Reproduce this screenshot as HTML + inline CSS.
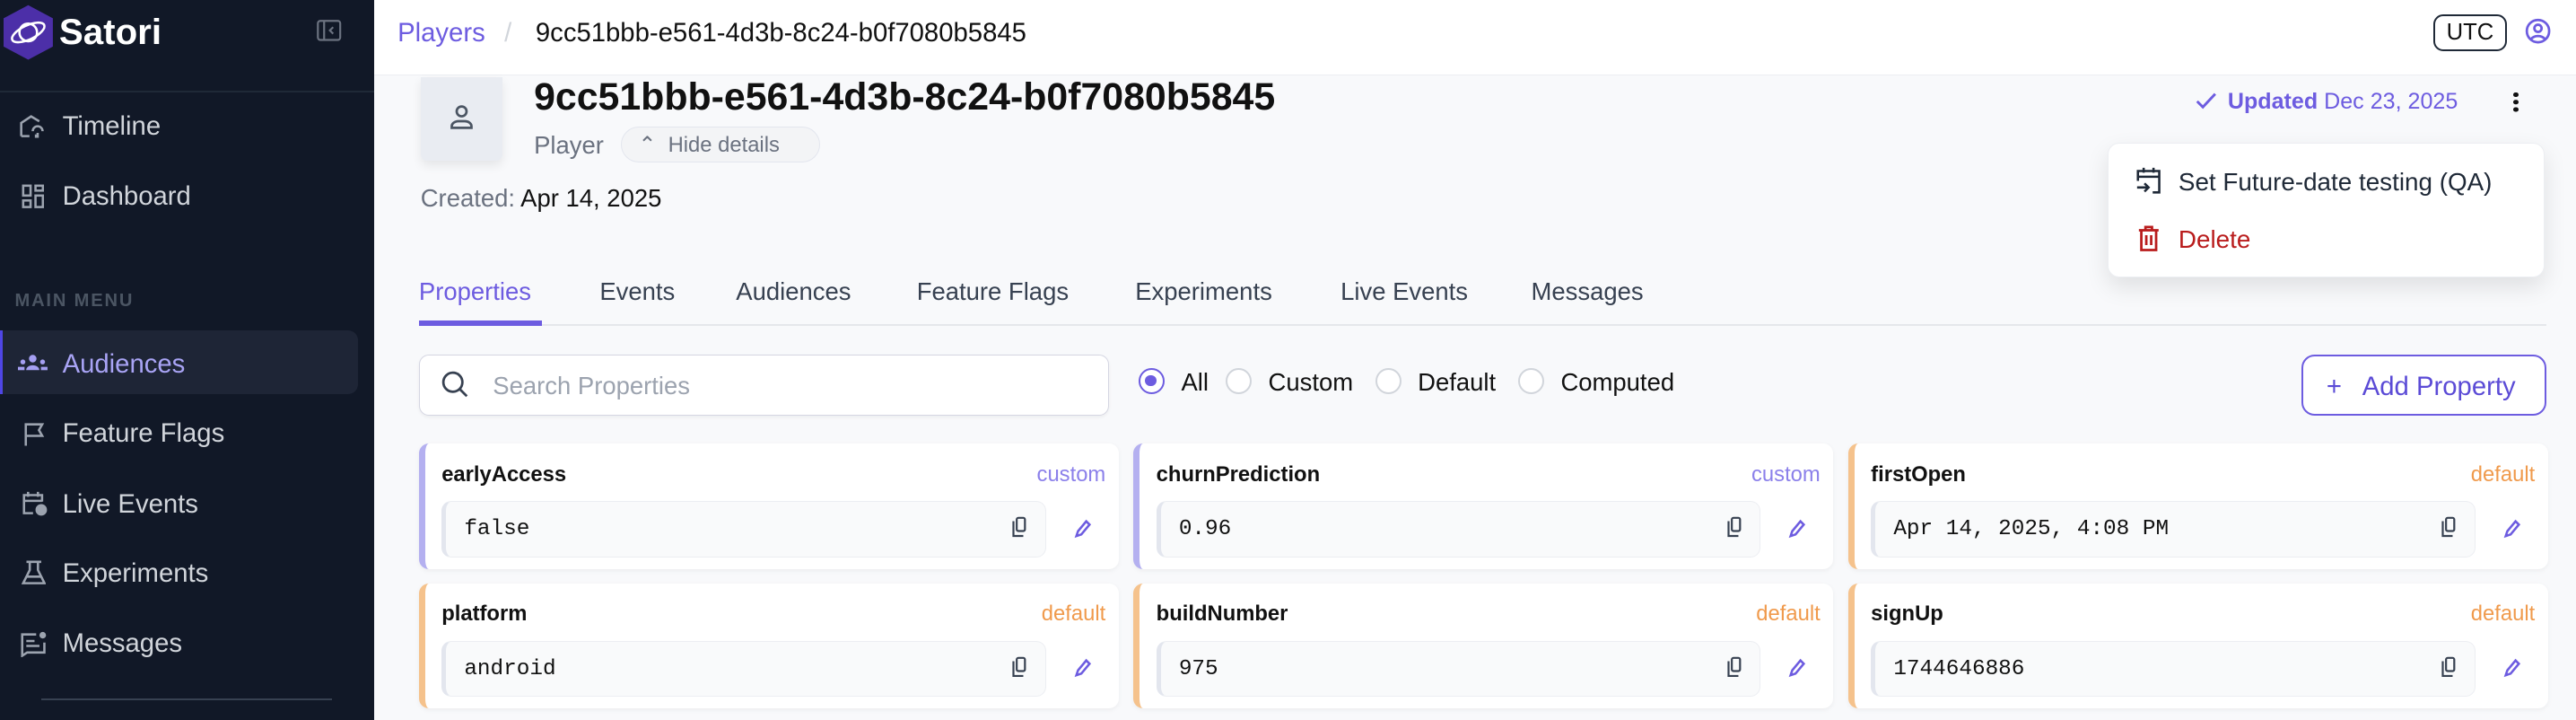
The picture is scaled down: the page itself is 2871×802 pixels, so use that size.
<!DOCTYPE html>
<html><head><meta charset="utf-8"><style>
html{zoom:1.831}
*{box-sizing:border-box;margin:0;padding:0}
body{width:1568px;height:438px;overflow:hidden;background:#f8f9fb;font-family:"Liberation Sans",sans-serif;position:relative}
.a{position:absolute;white-space:nowrap}
#sb{position:absolute;left:0;top:0;width:228px;height:438px;background:#111827}
.nav{position:absolute;left:38px;font-size:16px;color:#d1d5db;line-height:20px}
.ic{position:absolute;left:11px}
.card{position:absolute;width:426px;height:76px;background:#fff;border-radius:6px;box-shadow:0 1px 3px rgba(0,0,0,.05)}
.card.c{border-left:4px solid #b4b0f0}
.card.d{border-left:4px solid #f5c28c}
.nm{position:absolute;left:10px;top:11px;font-size:13px;font-weight:bold;color:#111}
.tg{position:absolute;right:8px;top:11px;font-size:13px}
.c .tg{color:#8b80ea}.d .tg{color:#f09a4c}
.vb{position:absolute;left:10px;top:35px;width:368px;height:34px;background:#f9fafb;border:1px solid #eceef2;border-left:3px solid #e3e6ee;border-radius:6px;font-family:"Liberation Mono",monospace;font-size:13.3px;color:#111;padding:9px 0 0 11px}
.tab{position:absolute;top:169px;font-size:15px;color:#374151}
.rd{position:absolute;top:224px;width:16px;height:16px;border-radius:50%;border:1.5px solid #d1d5db;background:#fff}
.rl{position:absolute;top:224px;font-size:15px;color:#111}
</style></head><body>
<div id="sb">
 <svg class="a" style="left:2px;top:3px" width="30" height="34" viewBox="0 0 28 31"><polygon points="14,0 28,7.5 28,23.5 14,31 0,23.5 0,7.5" fill="#4c2fa8"/><ellipse cx="14" cy="15.5" rx="10" ry="4" fill="none" stroke="#fff" stroke-width="1.3" transform="rotate(-25 14 15.5)"/><circle cx="14" cy="15.5" r="5" fill="none" stroke="#fff" stroke-width="1.3"/></svg>
 <div class="a" style="left:36px;top:7px;font-size:22px;font-weight:bold;color:#fff">Satori</div>
 <svg class="a" style="left:193px;top:12px" width="15" height="13" viewBox="0 0 15 13"><rect x="0.7" y="0.7" width="13.6" height="11.6" rx="1.5" fill="none" stroke="#6b7280" stroke-width="1.2"/><line x1="4.5" y1="1" x2="4.5" y2="12" stroke="#6b7280" stroke-width="1.2"/><path d="M10 4.5 L8 6.5 L10 8.5" fill="none" stroke="#6b7280" stroke-width="1.2"/></svg>
 <div class="a" style="left:0;top:55px;width:228px;height:1px;background:#1f2937"></div>
 <svg class="ic" style="top:69px" width="18" height="16" viewBox="0 0 18 16"><path d="M2 14V6l6-4 5 3M2 14h5" fill="none" stroke="#9ca3af" stroke-width="1.4"/><path d="M9 11a3 3 0 016 0M11 13v2M12 12v3" fill="none" stroke="#9ca3af" stroke-width="1.4"/></svg>
 <div class="nav" style="top:67px">Timeline</div>
 <svg class="ic" style="top:112px;left:13px" width="14" height="16" viewBox="0 0 14 16"><g fill="none" stroke="#9ca3af" stroke-width="1.4"><rect x="1" y="1" width="4.5" height="6"/><rect x="8.5" y="1" width="4.5" height="3"/><rect x="1" y="10" width="4.5" height="4"/><rect x="8.5" y="7" width="4.5" height="7"/></g></svg>
 <div class="nav" style="top:110px">Dashboard</div>
 <div class="a" style="left:9px;top:177px;font-size:11px;font-weight:bold;letter-spacing:1px;color:#4b5563">MAIN MENU</div>
 <div class="a" style="left:0;top:201px;width:218px;height:39px;background:#1e2536;border-radius:0 6px 6px 0;border-left:2px solid #4f46e5"></div>
 <svg class="ic" style="top:215px" width="18" height="12" viewBox="0 0 18 12"><g fill="#a59ff2"><circle cx="9" cy="3" r="2.3"/><path d="M5 10a4 3 0 018 0z"/><circle cx="3" cy="5" r="1.5"/><circle cx="15" cy="5" r="1.5"/><rect x="0" y="8" width="4" height="2"/><rect x="14" y="8" width="4" height="2"/></g></svg>
 <div class="nav" style="top:212px;color:#a9a4f5">Audiences</div>
 <svg class="ic" style="top:256px;left:14px" width="14" height="16" viewBox="0 0 14 16"><path d="M1.5 15V2h10l-2 3.5 2 3.5h-10" fill="none" stroke="#9ca3af" stroke-width="1.4"/></svg>
 <div class="nav" style="top:254px">Feature Flags</div>
 <svg class="ic" style="top:298px;left:13px" width="16" height="16" viewBox="0 0 16 16"><path d="M7 14H1.5V3h11v4M1.5 6.5h11M4 1v3M10 1v3" fill="none" stroke="#9ca3af" stroke-width="1.4"/><circle cx="12" cy="12" r="3.5" fill="#9ca3af"/></svg>
 <div class="nav" style="top:297px">Live Events</div>
 <svg class="ic" style="top:341px;left:13px" width="15" height="15" viewBox="0 0 15 15"><path d="M3 1h9M5 1v5L1 14h13L10 6V1M3 10h9" fill="none" stroke="#9ca3af" stroke-width="1.4"/></svg>
 <div class="nav" style="top:339px">Experiments</div>
 <svg class="ic" style="top:384px;left:12px" width="17" height="16" viewBox="0 0 17 16"><path d="M10 2H1.5v13l3-2H15V7M4 6h5M4 9h8" fill="none" stroke="#9ca3af" stroke-width="1.4"/><circle cx="14" cy="2.5" r="2" fill="#9ca3af"/></svg>
 <div class="nav" style="top:382px">Messages</div>
 <div class="a" style="left:25px;top:425px;width:177px;height:1px;background:#374151"></div>
</div>

<div class="a" style="left:228px;top:0;width:1340px;height:46px;background:#fff;border-bottom:1px solid #eceef2"></div>
<div class="a" style="left:242px;top:11px;font-size:16px;color:#6d5ce0">Players</div>
<div class="a" style="left:307px;top:11px;font-size:16px;color:#d1d5db">/</div>
<div class="a" style="left:326px;top:11px;font-size:16px;color:#111">9cc51bbb-e561-4d3b-8c24-b0f7080b5845</div>
<div class="a" style="left:1481px;top:9px;width:45px;height:22px;border:1.2px solid #1f2937;border-radius:6px;font-size:14px;color:#111;text-align:center;line-height:20px">UTC</div>
<svg class="a" style="left:1537px;top:11px" width="16" height="16" viewBox="0 0 16 16"><circle cx="8" cy="8" r="6.8" fill="none" stroke="#6d5ce0" stroke-width="1.5"/><circle cx="8" cy="6.3" r="2.2" fill="none" stroke="#6d5ce0" stroke-width="1.5"/><path d="M3.8 12.8a5 4 0 018.4 0" fill="none" stroke="#6d5ce0" stroke-width="1.5"/></svg>

<div class="a" style="left:256px;top:47px;width:50px;height:51px;background:#e9ecf2;border-radius:0 0 4px 4px;box-shadow:0 3px 6px rgba(0,0,0,.08)"></div>
<svg class="a" style="left:272px;top:62px" width="18" height="18" viewBox="0 0 18 18"><circle cx="9" cy="5.5" r="3" fill="none" stroke="#4b5563" stroke-width="1.5"/><path d="M3 15.5v-1a4 3 0 014-3h4a4 3 0 014 3v1z" fill="none" stroke="#4b5563" stroke-width="1.5"/></svg>
<div class="a" style="left:325px;top:46px;font-size:23.4px;font-weight:bold;color:#111">9cc51bbb-e561-4d3b-8c24-b0f7080b5845</div>
<div class="a" style="left:325px;top:80px;font-size:15px;color:#6b7280">Player</div>
<div class="a" style="left:378px;top:77px;width:121px;height:22px;border:1px solid #e3e6ee;border-radius:11px;background:#f3f4f6;font-size:13px;color:#6b7280;padding:3px 0 0 10px">⌃&nbsp; Hide details</div>
<div class="a" style="left:256px;top:112px;font-size:15px;color:#6b7280">Created: <span style="color:#111">Apr 14, 2025</span></div>

<svg class="a" style="left:1336px;top:55px" width="14" height="12" viewBox="0 0 14 12"><path d="M1.5 6.5l3.5 3.5 7.5-8" fill="none" stroke="#6d5ce0" stroke-width="1.6"/></svg>
<div class="a" style="left:1356px;top:54px;font-size:13.7px;color:#6d5ce0"><b>Updated</b> Dec 23, 2025</div>
<div class="a" style="left:1530px;top:56px;width:3px;height:3px;border-radius:50%;background:#111;box-shadow:0 4.5px 0 #111,0 9px 0 #111"></div>

<div class="a" style="left:255px;top:197px;width:1295px;height:1px;background:#e5e7eb"></div>
<div class="tab" style="left:255px;color:#6d5ce0">Properties</div>
<div class="a" style="left:255px;top:195px;width:75px;height:3px;background:#6d5ce0"></div>
<div class="tab" style="left:365px">Events</div>
<div class="tab" style="left:448px">Audiences</div>
<div class="tab" style="left:558px">Feature Flags</div>
<div class="tab" style="left:691px">Experiments</div>
<div class="tab" style="left:816px">Live Events</div>
<div class="tab" style="left:932px">Messages</div>

<div class="a" style="left:1283px;top:87px;width:266px;height:82px;background:#fff;border:1px solid #eceef2;border-radius:7px;box-shadow:0 6px 14px rgba(0,0,0,.1)"></div>
<svg class="a" style="left:1300px;top:101px" width="16" height="17" viewBox="0 0 16 17"><path d="M1.5 9V3h13v13h-4M1.5 6.5h13M5 1v3M11 1v3M1 13h7M5.5 10.5L8 13l-2.5 2.5" fill="none" stroke="#1f2937" stroke-width="1.4"/></svg>
<div class="a" style="left:1326px;top:102px;font-size:15.2px;color:#1f2937">Set Future-date testing (QA)</div>
<svg class="a" style="left:1301px;top:137px" width="14" height="16" viewBox="0 0 14 16"><path d="M1 3h12M5 3V1h4v2M2.5 3v12h9V3M5.5 6v6M8.5 6v6" fill="none" stroke="#b91c1c" stroke-width="1.5"/></svg>
<div class="a" style="left:1326px;top:137px;font-size:15.2px;color:#b91c1c">Delete</div>

<div class="a" style="left:255px;top:216px;width:420px;height:37px;background:#fff;border:1px solid #d5d6e2;border-radius:6px;box-shadow:0 1px 2px rgba(0,0,0,.05)"></div>
<svg class="a" style="left:268px;top:225px" width="18" height="18" viewBox="0 0 18 18"><circle cx="7.5" cy="7.5" r="5.8" fill="none" stroke="#374151" stroke-width="1.5"/><path d="M12 12l4 4" stroke="#374151" stroke-width="1.5"/></svg>
<div class="a" style="left:300px;top:226px;font-size:15px;color:#9ca3af">Search Properties</div>

<div class="rd" style="left:693px;border-color:#6d5ce0"><div style="position:absolute;left:3px;top:3px;width:7px;height:7px;border-radius:50%;background:#6d5ce0"></div></div>
<div class="rl" style="left:719px">All</div>
<div class="rd" style="left:746px"></div><div class="rl" style="left:772px">Custom</div>
<div class="rd" style="left:837px"></div><div class="rl" style="left:863px">Default</div>
<div class="rd" style="left:924px"></div><div class="rl" style="left:950px">Computed</div>

<div class="a" style="left:1401px;top:216px;width:149px;height:37px;border:1.5px solid #6d5ce0;border-radius:8px;background:#fff;font-size:16px;color:#5b4bd6;padding:9px 0 0 14px">+&nbsp;&nbsp; Add Property</div>

<div class="card c" style="left:255px;top:270px"><div class="nm">earlyAccess</div><div class="tg">custom</div><div class="vb">false</div></div>
<div class="card c" style="left:690px;top:270px"><div class="nm">churnPrediction</div><div class="tg">custom</div><div class="vb">0.96</div></div>
<div class="card d" style="left:1125px;top:270px"><div class="nm">firstOpen</div><div class="tg">default</div><div class="vb">Apr 14, 2025, 4:08 PM</div></div>
<div class="card d" style="left:255px;top:355px"><div class="nm">platform</div><div class="tg">default</div><div class="vb">android</div></div>
<div class="card d" style="left:690px;top:355px"><div class="nm">buildNumber</div><div class="tg">default</div><div class="vb">975</div></div>
<div class="card d" style="left:1125px;top:355px"><div class="nm">signUp</div><div class="tg">default</div><div class="vb">1744646886</div></div>

<svg width="0" height="0" style="position:absolute"><defs>
<g id="cpy"><path d="M3 3v9h6" fill="none" stroke="#374151" stroke-width="1.2"/><rect x="5" y="1" width="5" height="8" rx="1" fill="none" stroke="#374151" stroke-width="1.2"/></g>
<g id="pen"><path d="M2 11l1-3 5-6 2 2-5 6z" fill="none" stroke="#6d5ce0" stroke-width="1.4"/></g>
</defs></svg>
<svg class="a" style="left:614px;top:314px" width="12" height="13"><use href="#cpy"/></svg>
<svg class="a" style="left:653px;top:315px" width="12" height="13"><use href="#pen"/></svg>
<svg class="a" style="left:1049px;top:314px" width="12" height="13"><use href="#cpy"/></svg>
<svg class="a" style="left:1088px;top:315px" width="12" height="13"><use href="#pen"/></svg>
<svg class="a" style="left:1484px;top:314px" width="12" height="13"><use href="#cpy"/></svg>
<svg class="a" style="left:1523px;top:315px" width="12" height="13"><use href="#pen"/></svg>
<svg class="a" style="left:614px;top:399px" width="12" height="13"><use href="#cpy"/></svg>
<svg class="a" style="left:653px;top:400px" width="12" height="13"><use href="#pen"/></svg>
<svg class="a" style="left:1049px;top:399px" width="12" height="13"><use href="#cpy"/></svg>
<svg class="a" style="left:1088px;top:400px" width="12" height="13"><use href="#pen"/></svg>
<svg class="a" style="left:1484px;top:399px" width="12" height="13"><use href="#cpy"/></svg>
<svg class="a" style="left:1523px;top:400px" width="12" height="13"><use href="#pen"/></svg>
</body></html>
